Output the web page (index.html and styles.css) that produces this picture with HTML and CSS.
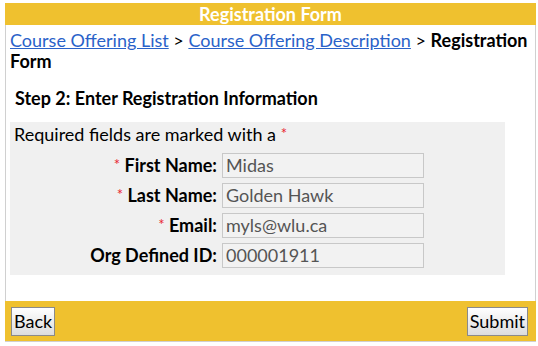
FILE: index.html
```html
<!DOCTYPE html>
<html lang="en">
<head>
    <meta charset="UTF-8">
    <title>Registration Form</title>
    <link rel="stylesheet" href="styles.css">
</head>
<body>
    <div class="frame">
        <div class="header">Registration Form</div>
        <div class="content">
            <div class="crumbs">
                <a href="#">Course Offering List</a> &gt; <a href="#">Course Offering Description</a> &gt; <b>Registration Form</b>
            </div>
            <h2>Step 2: Enter Registration Information</h2>
            <div class="form-box">
                <div class="note">Required fields are marked with a <span class="req">*</span></div>
                <div class="row">
                    <label><span class="req">*</span> First Name:</label>
                    <input type="text" value="Midas" readonly>
                </div>
                <div class="row">
                    <label><span class="req">*</span> Last Name:</label>
                    <input type="text" value="Golden Hawk" readonly>
                </div>
                <div class="row">
                    <label><span class="req">*</span> Email:</label>
                    <input type="text" value="myls@wlu.ca" readonly>
                </div>
                <div class="row">
                    <label>Org Defined ID:</label>
                    <input type="text" value="000001911" readonly>
                </div>
            </div>
        </div>
        <div class="footer">
            <button>Back</button>
            <button>Submit</button>
        </div>
    </div>
</body>
</html>
```

FILE: styles.css
```css
body {
    margin: 0;
    font-family: Lato, "Open Sans", sans-serif;
    background-color: white;
}
.frame {
    margin: 3px 3px 0 5px;
    width: 531px;
    height: 339px;
    box-sizing: border-box;
    display: flex;
    flex-direction: column;
    border-bottom: 1px solid #d0d0d0;
}
.header {
    background-color: #efc12f;
    color: white;
    font-weight: bold;
    font-size: 18px;
    text-align: center;
    height: 22px;
    line-height: 22px;
}
.content {
    flex: 1;
    border-left: 1px solid #d0d0d0;
    border-right: 1px solid #d0d0d0;
    padding: 5px 4px 0 4px;
}
.crumbs {
    font-size: 18px;
    line-height: 21px;
}
.crumbs a {
    color: #2a62c9;
}
h2 {
    font-size: 18px;
    margin: 15px 0 0 5px;
    line-height: 22px;
}
.form-box {
    background-color: #f0f0f0;
    width: 495px;
    margin-top: 13px;
    padding: 0 0 5px 4px;
    box-sizing: border-box;
    font-size: 18px;
}
.note {
    line-height: 22px;
    margin-bottom: 5px;
}
.req {
    color: #e8232e;
    font-size: 15px;
    font-weight: normal;
    vertical-align: 2px;
}
.row {
    display: flex;
    align-items: center;
    height: 30px;
}
.row label {
    width: 208px;
    box-sizing: border-box;
    text-align: right;
    font-weight: bold;
    padding-right: 5px;
}
.row input {
    width: 202px;
    height: 25px;
    box-sizing: border-box;
    border: 1px solid #c8c8c8;
    background-color: #f2f2f2;
    color: #555;
    font-family: inherit;
    font-size: 18px;
    padding: 0 3px;
}
.footer {
    background-color: #efc12f;
    height: 40px;
    display: flex;
    justify-content: space-between;
    align-items: center;
    padding: 0 8px 0 6px;
}
.footer button {
    font-family: inherit;
    font-size: 18px;
    height: 29px;
    padding: 0 2px;
    border: 1px solid #8a8a8a;
    background: linear-gradient(#ffffff, #dcdcdc);
    color: black;
}
```
